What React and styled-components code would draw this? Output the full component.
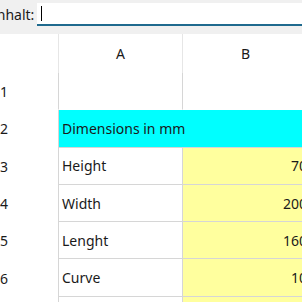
import styled, {createGlobalStyle} from "styled-components";

const GlobalStyle = createGlobalStyle`
    html, body {
        margin: 0;
        padding: 0;
        background: #ffffff;
    }
    body {
        font-family: "Noto Sans", "Open Sans", sans-serif;
        color: #1a1a1a;
    }
`;

const Window = styled.div`
    width: 302px;
    height: 302px;
    overflow: hidden;
    display: flex;
    flex-direction: column;
    background: #ffffff;
`;

const Toolbar = styled.div`
    height: 34px;
    flex-shrink: 0;
    display: flex;
    align-items: flex-start;
    gap: 3px;
    padding-top: 3px;
    box-sizing: border-box;
    background: #f0f0f0;
`;

const Label = styled.span`
    margin-left: -8px;
    margin-top: 3px;
    font-size: 14px;
    line-height: 18px;
    white-space: nowrap;
`;

const Input = styled.div`
    flex: 1;
    height: 23px;
    box-sizing: border-box;
    background: #ffffff;
    border-bottom: 2px solid #1f6a8e;
    display: flex;
    align-items: center;
    padding-left: 4px;
`;

const Caret = styled.div`
    width: 1px;
    height: 15px;
    background: #000000;
`;

const Sheet = styled.div`
    display: grid;
    grid-template-columns: 58px 124px 126px;
    grid-auto-rows: 37.3px;
    grid-template-rows: 39px;
`;

const ColHeader = styled.div`
    display: flex;
    align-items: center;
    justify-content: center;
    font-size: 14px;
    border-left: 1px solid #e6e6e6;
    box-sizing: border-box;
`;

const Corner = styled.div``;

const RowHeader = styled.div`
    display: flex;
    align-items: center;
    padding-left: 0;
    font-size: 14px;
`;

const Cell = styled.div`
    display: flex;
    align-items: center;
    justify-content: ${p => (p.$align === "right" ? "flex-end" : "flex-start")};
    padding: 0 ${p => (p.$align === "right" ? "1px" : "3px")};
    font-size: 14px;
    white-space: nowrap;
    overflow: visible;
    box-sizing: border-box;
    background: ${p => p.$bg || "#ffffff"};
    border-left: 1px solid #d6d6d6;
    border-bottom: 1px solid ${p => (p.$noBottom ? "transparent" : "#d6d6d6")};
    grid-column: ${p => p.$span || "auto"};
`;

const rows = [
    {label: "Height", value: "70"},
    {label: "Width", value: "200"},
    {label: "Lenght", value: "160"},
    {label: "Curve", value: "10"},
];

const App = () => {
    return (
        <Window>
            <GlobalStyle/>
            <Toolbar>
                <Label>Inhalt:</Label>
                <Input><Caret/></Input>
            </Toolbar>
            <Sheet>
                <Corner/>
                <ColHeader>A</ColHeader>
                <ColHeader>B</ColHeader>

                <RowHeader>1</RowHeader>
                <Cell $noBottom/>
                <Cell $noBottom/>

                <RowHeader>2</RowHeader>
                <Cell $span="2 / span 2" $bg="#00ffff">Dimensions in mm</Cell>

                {rows.map((r, i) => (
                    <>
                        <RowHeader key={"h" + i}>{i + 3}</RowHeader>
                        <Cell key={"l" + i}>{r.label}</Cell>
                        <Cell key={"v" + i} $align="right" $bg="#ffff9e">{r.value}</Cell>
                    </>
                ))}

                <RowHeader>7</RowHeader>
                <Cell/>
                <Cell $bg="#ffff9e"/>
            </Sheet>
        </Window>
    );
};

export default App;
